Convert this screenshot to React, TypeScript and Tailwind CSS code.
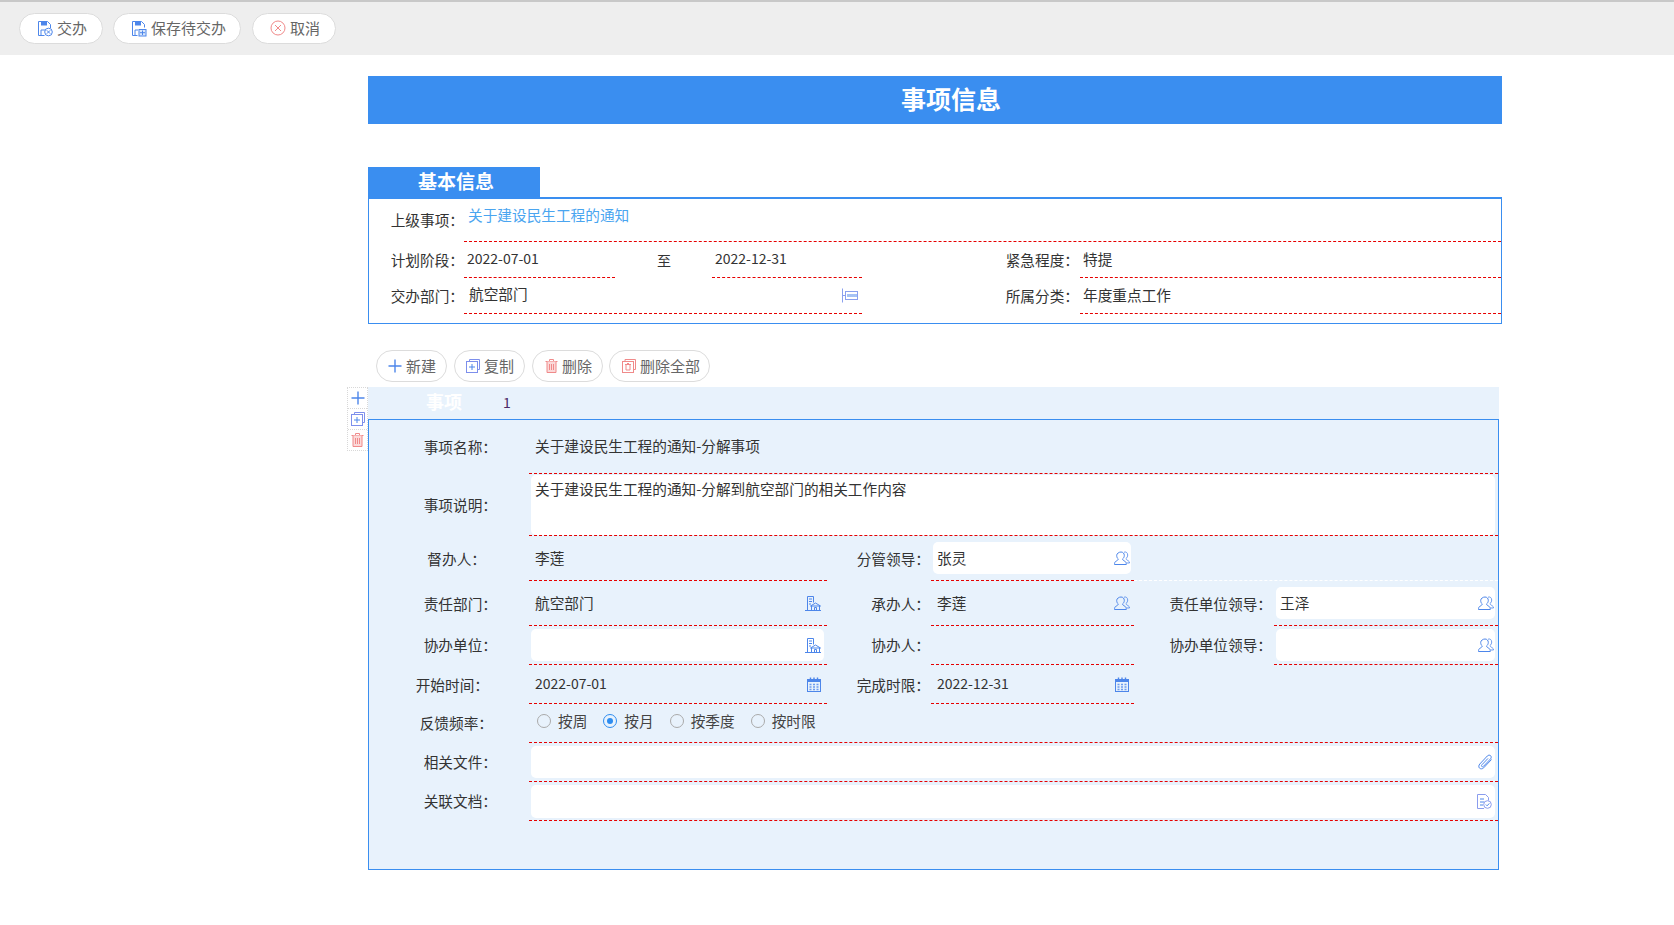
import React from "react";

const B = "#4d86ea";
const R = "#f08a8a";

function SaveX() {
  return (
    <svg width="16" height="17" viewBox="0 0 16 17" fill="none" stroke={B} strokeWidth="1">
      <path d="M1.5 1.5h9l3 3v3.5M7.5 15.5h-6v-14" />
      <path d="M4 1.5h6v4H4z" fill={B} stroke="none" />
      <path d="M4 15v-5h4" />
      <circle cx="11.5" cy="12" r="3.8" />
      <path d="M9.8 10.3l3.4 3.4M13.2 10.3l-3.4 3.4" />
    </svg>
  );
}
function SavePlus() {
  return (
    <svg width="16" height="17" viewBox="0 0 16 17" fill="none" stroke={B} strokeWidth="1">
      <path d="M1.5 1.5h9l3 3v3M6.5 15.5h-5v-14" />
      <path d="M4 1.5h6v4H4z" fill={B} stroke="none" />
      <path d="M4 15v-5h3" />
      <rect x="8" y="9.5" width="7" height="6.5" fill="#dbe8fb" />
      <path d="M11.5 10.5v4.5M9 12.7h5" />
    </svg>
  );
}
function CancelIcon() {
  return (
    <svg width="16" height="16" viewBox="0 0 16 16" fill="none" stroke={R} strokeWidth="1">
      <circle cx="8" cy="8" r="7" />
      <path d="M5 5l6 6M11 5l-6 6" />
    </svg>
  );
}
function PlusIcon() {
  return (
    <svg width="14" height="14" viewBox="0 0 14 14" fill="none" stroke={B} strokeWidth="1.4">
      <path d="M7 0.5v13M0.5 7h13" />
    </svg>
  );
}
function CopyIcon() {
  return (
    <svg width="14" height="14" viewBox="0 0 14 14" fill="none" stroke="#7d8fec" strokeWidth="1">
      <path d="M3.5 2.5v-2h10v10h-2" />
      <rect x="0.5" y="2.5" width="11" height="11" />
      <path d="M6 5v6M3 8h6" stroke={B} />
    </svg>
  );
}
function TrashIcon() {
  return (
    <svg width="13" height="14" viewBox="0 0 13 14" fill="none" stroke={R} strokeWidth="1">
      <path d="M0.5 2.5h12M4.5 2.5v-2h4v2" />
      <path d="M2 2.5v11h9v-11" fill="#fbd9d9" />
      <path d="M4.5 5v6M6.5 5v6M8.5 5v6" />
    </svg>
  );
}
function TrashAllIcon() {
  return (
    <svg width="14" height="14" viewBox="0 0 14 14" fill="none" stroke={R} strokeWidth="1">
      <path d="M3 2.5v-2h10.500v10h-2" />
      <rect x="0.5" y="2.500" width="11" height="11" />
      <path d="M3 5.500h6M4 5.500v5.500h4v-5.500M5 4.500h2" />
    </svg>
  );
}
function OrgIcon() {
  return (
    <svg width="16" height="15" viewBox="0 0 16 15" fill="none" stroke="#8aa0ee" strokeWidth="1">
      <path d="M0.500 0.500v14M0.500 7.500h3" />
      <rect x="3.500" y="3.500" width="12" height="8" />
      <path d="M6 6v3M8 6v3M10 6v3M12 6v3M14 6v3" stroke={B} />
    </svg>
  );
}
function BuildingIcon() {
  return (
    <svg width="16" height="15" viewBox="0 0 16 15" fill="none" stroke={B} strokeWidth="1">
      <path d="M2.500 14.500v-14h6v6" />
      <path d="M4 3h3M4 5.500h3M4 8h2" />
      <path d="M0 14.500h16" />
      <path d="M6.500 14.500v-4.500M14.500 14.500v-4.500M5.500 10l5-3 5 3z" />
      <path d="M9.500 14.500v-3h2v3" />
    </svg>
  );
}
function PersonIcon() {
  return (
    <svg width="16" height="15" viewBox="0 0 16 15" fill="none" stroke={B} strokeWidth="1">
      <path d="M10 1.200c2-.8 3.700.6 3.700 2.800 0 1.500-.7 2.800-1.700 3.500 0 1 .9 1.500 2.200 2.200.9.500 1.300 1.300 1.300 2.300h-3" opacity="0.8" />
      <path d="M7 1c2 0 3.300 1.500 3.300 3.400 0 1.500-.7 2.800-1.700 3.500 0 1.100 1 1.700 2.300 2.400 1 .500 1.400 1.500 1.400 3.200H.5c0-1.700.4-2.700 1.400-3.200 1.300-.7 2.300-1.300 2.300-2.400C3.200 7.200 2.700 5.900 2.700 4.400 2.700 2.500 5 1 7 1z" />
    </svg>
  );
}
function CalendarIcon() {
  return (
    <svg width="14" height="15" viewBox="0 0 14 15" fill="none" stroke={B} strokeWidth="1">
      <rect x="0.500" y="2.500" width="13" height="12" />
      <path d="M1 3h12v2H1z" fill={B} stroke="none" />
      <path d="M3.500 0.500v2.500M7 0.500v2.500M10.500 0.500v2.500" strokeWidth="1.400" />
      <path d="M2.500 7.500h2M6 7.500h2M9.500 7.500h2M2.500 10h2M6 10h2M9.500 10h2M2.500 12.500h2M6 12.500h2M9.500 12.500h2" strokeWidth="1.300" opacity="0.8" />
    </svg>
  );
}
function ClipIcon() {
  return (
    <svg width="15" height="16" viewBox="0 0 15 16" fill="none" stroke={B} strokeWidth="1">
      <path d="M13.500 5.500l-7.800 8.300c-1.300 1.300-3.200 1.300-4.200.3s-.9-2.800.3-4.100l7.500-8c1-1 2.400-1.100 3.300-.3.900.9.800 2.200-.1 3.200l-6.900 7.300c-.6.600-1.400.7-1.800.3-.5-.5-.4-1.200.2-1.800L10 4.400" />
    </svg>
  );
}
function DocIcon() {
  return (
    <svg width="15" height="15" viewBox="0 0 15 15" fill="none" stroke="#8a9cee" strokeWidth="1">
      <path d="M7 14.500H0.500v-14h8l3 3v3" />
      <path d="M3 5h4M3 8h4M3 11h3" stroke={B} />
      <circle cx="10.500" cy="10.500" r="3.800" />
      <path d="M8.800 10.500l1.300 1.300 2.200-2.400" stroke={B} />
    </svg>
  );
}

function Pill({ icon, text, className }: { icon: React.ReactNode; text: string; className: string }) {
  return (
    <div className={`flex items-center rounded-full border border-[#dcdcdc] bg-white text-[15px] leading-none text-[#666] ${className}`}>
      {icon}
      <span className="pb-[1px]">{text}</span>
    </div>
  );
}

function Label({ text, w, pr, cls = "" }: { text: string; w: string; pr: string; cls?: string }) {
  return <div className={`shrink-0 whitespace-nowrap text-right text-[14.67px] text-[#333] ${w} ${pr} ${cls}`}>{text}</div>;
}

function Field({
  text,
  icon,
  white,
  w,
  boxH = "h-[32px]",
  size = "text-[14.67px]",
  boxAlign = "items-center",
  pr = "pr-[3px]",
}: {
  text?: string;
  icon?: React.ReactNode;
  white?: boolean;
  w: string;
  boxH?: string;
  size?: string;
  boxAlign?: string;
  pr?: string;
}) {
  return (
    <div className={`flex h-full items-center border-b border-dashed border-[#e60000] pl-[2px] pr-[3px] ${w}`}>
      <div className={`flex w-full justify-between rounded-[5px] pl-[4px] text-[#333] ${pr} ${size} ${boxH} ${boxAlign} ${white ? "bg-white" : ""}`}>
        <span className="pb-[1px]">{text}</span>
        {icon}
      </div>
    </div>
  );
}

function Radio({ text, on }: { text: string; on?: boolean }) {
  return (
    <div className="flex items-center gap-[7px]">
      <span className={`flex h-[14px] w-[14px] items-center justify-center rounded-full border ${on ? "border-[#2d8cf0]" : "border-[#aaaaaa]"}`}>
        {on && <span className="h-[6px] w-[6px] rounded-full bg-[#2d8cf0]" />}
      </span>
      <span className="text-[14.67px] text-[#444]">{text}</span>
    </div>
  );
}

const L1 = "w-[160px]";
const L2 = "w-[104px]";
const L3 = "w-[140px]";
const V1 = "w-[298px]";
const V2 = "w-[203px]";
const VF = "flex-1";
const LINE = "border-b border-dashed border-[#e60000]";
const UP = "pb-[2px]";

export default function App() {
  return (
    <div
      className="min-h-[925px] w-full bg-white"
      style={{ fontFamily: '"Noto Sans CJK SC", "Liberation Sans", sans-serif' }}
    >
      <div className="flex h-[55px] items-center gap-[10px] border-t-2 border-[#c8c8c8] bg-[#eeeeee] pl-[19px] pb-[1px]">
        <Pill className="h-[31px] w-[84px] gap-[4px] pl-[17px]" icon={<SaveX />} text="交办" />
        <Pill className="h-[31px] w-[128px] gap-[4px] pl-[17px]" icon={<SavePlus />} text="保存待交办" />
        <Pill className="ml-px h-[31px] w-[84px] gap-[4px] pl-[17px]" icon={<CancelIcon />} text="取消" />
      </div>

      <div className="ml-[368px] w-[1134px] pt-[21px]">
        <div className="flex h-[48px] items-center justify-center bg-[#3a8ef0] pl-[32px] pb-[2px] text-[25px] font-bold text-white">事项信息</div>

        <div className="mt-[43px] flex h-[30px] w-[172px] items-center justify-center bg-[#3a8ef0] pl-[4px] pb-[2px] text-[19px] font-bold text-white">基本信息</div>

        <div className="h-[127px] border border-t-2 border-[#3a8ef0]">
          <div className="flex h-[43px]">
            <Label text="上级事项：" w="w-[95px]" pr="pr-0" cls="pt-[10px]" />
            <div className={`flex-1 pl-[4px] pt-[5px] text-[14.67px] text-[#4aa5f0] ${LINE}`}>关于建设民生工程的通知</div>
          </div>
          <div className="flex h-[36px] items-center">
            <Label text="计划阶段：" w="w-[95px]" pr="pr-0" />
            <div className={`flex h-full w-[151px] items-center pl-[3px] pb-[3px] text-[14px] text-[#333] ${LINE}`}>2022-07-01</div>
            <div className="w-[97px] pl-[42px] text-[14px] text-[#333]">至</div>
            <div className={`flex h-full w-[150px] items-center pl-[3px] pb-[3px] text-[14px] text-[#333] ${LINE}`}>2022-12-31</div>
            <Label text="紧急程度：" w="w-[218px]" pr="pr-[1px]" />
            <div className={`flex h-full flex-1 items-center pl-[3px] pb-[1px] text-[14.67px] text-[#333] ${LINE}`}>特提</div>
          </div>
          <div className="flex h-[36px] items-center">
            <Label text="交办部门：" w="w-[95px]" pr="pr-0" />
            <div className={`flex h-full w-[398px] items-center justify-between pl-[5px] pr-[4px] text-[14.67px] text-[#333] ${LINE}`}>
              <span className="pb-[3px]">航空部门</span>
              <OrgIcon />
            </div>
            <Label text="所属分类：" w="w-[218px]" pr="pr-[1px]" />
            <div className={`flex h-full flex-1 items-center pl-[3px] pb-[1px] text-[14.67px] text-[#333] ${LINE}`}>年度重点工作</div>
          </div>
        </div>

        <div className="mt-[26px] flex gap-[7px] pl-[8px]">
          <Pill className="h-[32px] w-[71px] gap-[4px] pl-[11px]" icon={<PlusIcon />} text="新建" />
          <Pill className="h-[32px] w-[71px] gap-[4px] pl-[11px]" icon={<CopyIcon />} text="复制" />
          <Pill className="h-[32px] w-[71px] gap-[4px] pl-[12px]" icon={<TrashIcon />} text="删除" />
          <Pill className="-ml-px h-[32px] w-[101px] gap-[4px] pl-[12px]" icon={<TrashAllIcon />} text="删除全部" />
        </div>

        <div className="relative mt-[5px] w-[1131px]">
          <div className="absolute right-full top-0 flex w-[21px] flex-col border border-dotted border-[#d8d8d8] bg-white">
            <div className="flex h-[21px] items-center justify-center border-b border-dotted border-[#d8d8d8]"><PlusIcon /></div>
            <div className="flex h-[21px] items-center justify-center border-b border-dotted border-[#d8d8d8]"><CopyIcon /></div>
            <div className="flex h-[20px] items-center justify-center"><TrashIcon /></div>
          </div>

          <div className="flex h-[32px] items-center bg-[#e8f2fc]">
            <div className="w-[135px] pb-[4px] pl-[58px] text-[18px] font-bold text-white">事项</div>
            <div className="pb-[1px] text-[14px] text-[#4b2a66]">1</div>
          </div>

          <div className="h-[451px] border border-[#3a8ef0] bg-[#e8f2fc]">
            <div className="flex h-[54px] items-center">
              <Label text="事项名称：" w={L1} pr="pr-[32px]" />
              <Field w={VF} text="关于建设民生工程的通知-分解事项" />
            </div>
            <div className="flex h-[62px] items-center">
              <Label text="事项说明：" w={L1} pr="pr-[32px]" />
              <Field w={VF} white text="关于建设民生工程的通知-分解到航空部门的相关工作内容" boxH="h-[60px] pt-[3px]" boxAlign="items-start" />
            </div>
            <div className="flex h-[45px] items-center">
              <Label text="督办人：" w={L1} pr="pr-[43px]" />
              <Field w={V1} text="李莲" />
              <Label text="分管领导：" w={L2} pr="pr-[1px]" />
              <Field w={V2} white text="张灵" icon={<PersonIcon />} pr="pr-[1px]" />
              <div className="h-full flex-1 border-b border-dashed border-white" />
            </div>
            <div className="flex h-[45px] items-center">
              <Label text="责任部门：" w={L1} pr="pr-[32px]" />
              <Field w={V1} text="航空部门" icon={<BuildingIcon />} />
              <Label text="承办人：" w={L2} pr="pr-[1px]" />
              <Field w={V2} text="李莲" icon={<PersonIcon />} pr="pr-[1px]" />
              <Label text="责任单位领导：" w={L3} pr="pr-[2px]" />
              <Field w={VF} white text="王泽" icon={<PersonIcon />} pr="pr-[1px]" />
            </div>
            <div className="flex h-[39px] items-center">
              <Label text="协办单位：" w={L1} pr="pr-[32px]" cls={UP} />
              <Field w={V1} white icon={<BuildingIcon />} />
              <Label text="协办人：" w={L2} pr="pr-[1px]" cls={UP} />
              <Field w={V2} />
              <Label text="协办单位领导：" w={L3} pr="pr-[2px]" cls={UP} />
              <Field w={VF} white icon={<PersonIcon />} pr="pr-[1px]" />
            </div>
            <div className="flex h-[39px] items-center">
              <Label text="开始时间：" w={L1} pr="pr-[40px]" />
              <Field w={V1} size="text-[14px]" text="2022-07-01" icon={<CalendarIcon />} />
              <Label text="完成时限：" w={L2} pr="pr-[1px]" />
              <Field w={V2} size="text-[14px]" text="2022-12-31" icon={<CalendarIcon />} pr="pr-[2px]" />
            </div>
            <div className="flex h-[39px] items-center">
              <Label text="反馈频率：" w={L1} pr="pr-[36px]" cls={UP} />
              <div className={`flex h-full flex-1 items-center gap-[16px] pb-[5px] pl-[8px] ${LINE}`}>
                <Radio text="按周" />
                <Radio text="按月" on />
                <Radio text="按季度" />
                <Radio text="按时限" />
              </div>
            </div>
            <div className="flex h-[39px] items-center">
              <Label text="相关文件：" w={L1} pr="pr-[32px]" cls={UP} />
              <Field w={VF} white icon={<ClipIcon />} pr="pr-[2px]" />
            </div>
            <div className="flex h-[39px] items-center">
              <Label text="关联文档：" w={L1} pr="pr-[32px]" cls={UP} />
              <Field w={VF} white icon={<DocIcon />} boxH="h-[33px]" />
            </div>
          </div>
        </div>
      </div>
    </div>
  );
}
